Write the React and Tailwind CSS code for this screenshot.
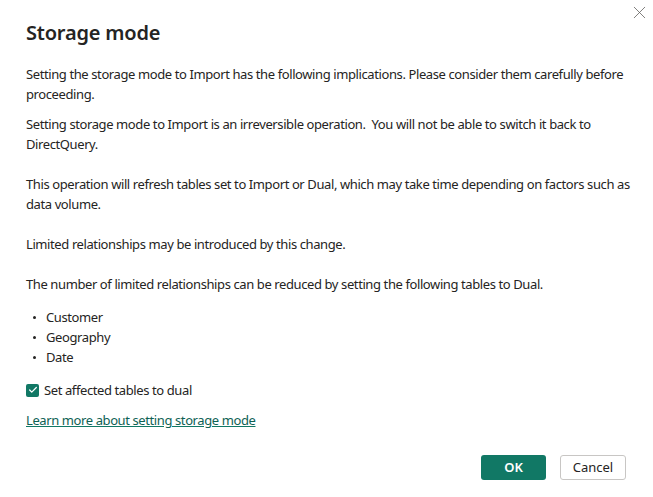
import { Check, X } from "lucide-react";

export default function App() {
  const tables = ["Customer", "Geography", "Date"];

  return (
    <div
      className="relative w-[653px] h-[497px] bg-white text-[#252423]"
      style={{ fontFamily: '"Segoe UI", "Noto Sans", sans-serif' }}
    >
      {/* close */}
      <button className="absolute left-[628px] top-[1px] w-[22px] h-[22px] flex items-center justify-center text-[#605e5c]">
        <X size={21} strokeWidth={0.9} />
      </button>

      <div className="pl-[26px] pr-[20px] pt-[20px]">
        <h1 className="text-[20px] leading-[26px] font-semibold tracking-[-0.2px] text-[#252423]">Storage mode</h1>

        <div className="mt-[18px] text-[13px] leading-[20px] tracking-[-0.4px]">
          <p>
            Setting the storage mode to Import has the following implications. Please consider them carefully before
            proceeding.
          </p>
          <p className="mt-[10px]">
            Setting storage mode to Import is an irreversible operation.&nbsp; You will not be able to switch it back to
            DirectQuery.
          </p>
          <p className="mt-[20px]">
            This operation will refresh tables set to Import or Dual, which may take time depending on factors such as
            data volume.
          </p>
          <p className="mt-[20px]">Limited relationships may be introduced by this change.</p>
          <p className="mt-[20px]">
            The number of limited relationships can be reduced by setting the following tables to Dual.
          </p>

          <ul className="mt-[13px]">
            {tables.map((t) => (
              <li key={t} className="flex items-center h-[20px]">
                <span className="w-[20px] pl-[7px] flex items-center">
                  <span className="w-[3px] h-[3px] rounded-full bg-[#252423]" />
                </span>
                <span>{t}</span>
              </li>
            ))}
          </ul>

          <label className="mt-[13px] flex items-center gap-[5px] h-[20px]">
            <span className="w-[13px] h-[13px] rounded-[2px] bg-[#117865] flex items-center justify-center text-white">
              <Check size={10} strokeWidth={3} />
            </span>
            <span>Set affected tables to dual</span>
          </label>

          <a href="#" className="mt-[10px] block w-fit underline text-[#0e6154] decoration-[#117865]">
            Learn more about setting storage mode
          </a>
        </div>
      </div>

      {/* footer */}
      <div className="absolute right-[27px] bottom-[17px] flex gap-[14px]">
        <button className="w-[65px] h-[25px] rounded-[3px] bg-[#117865] text-white text-[13px] font-semibold">
          OK
        </button>
        <button className="w-[66px] h-[25px] rounded-[3px] border border-[#c8c6c4] bg-white text-[13px] text-[#252423]">
          Cancel
        </button>
      </div>
    </div>
  );
}
